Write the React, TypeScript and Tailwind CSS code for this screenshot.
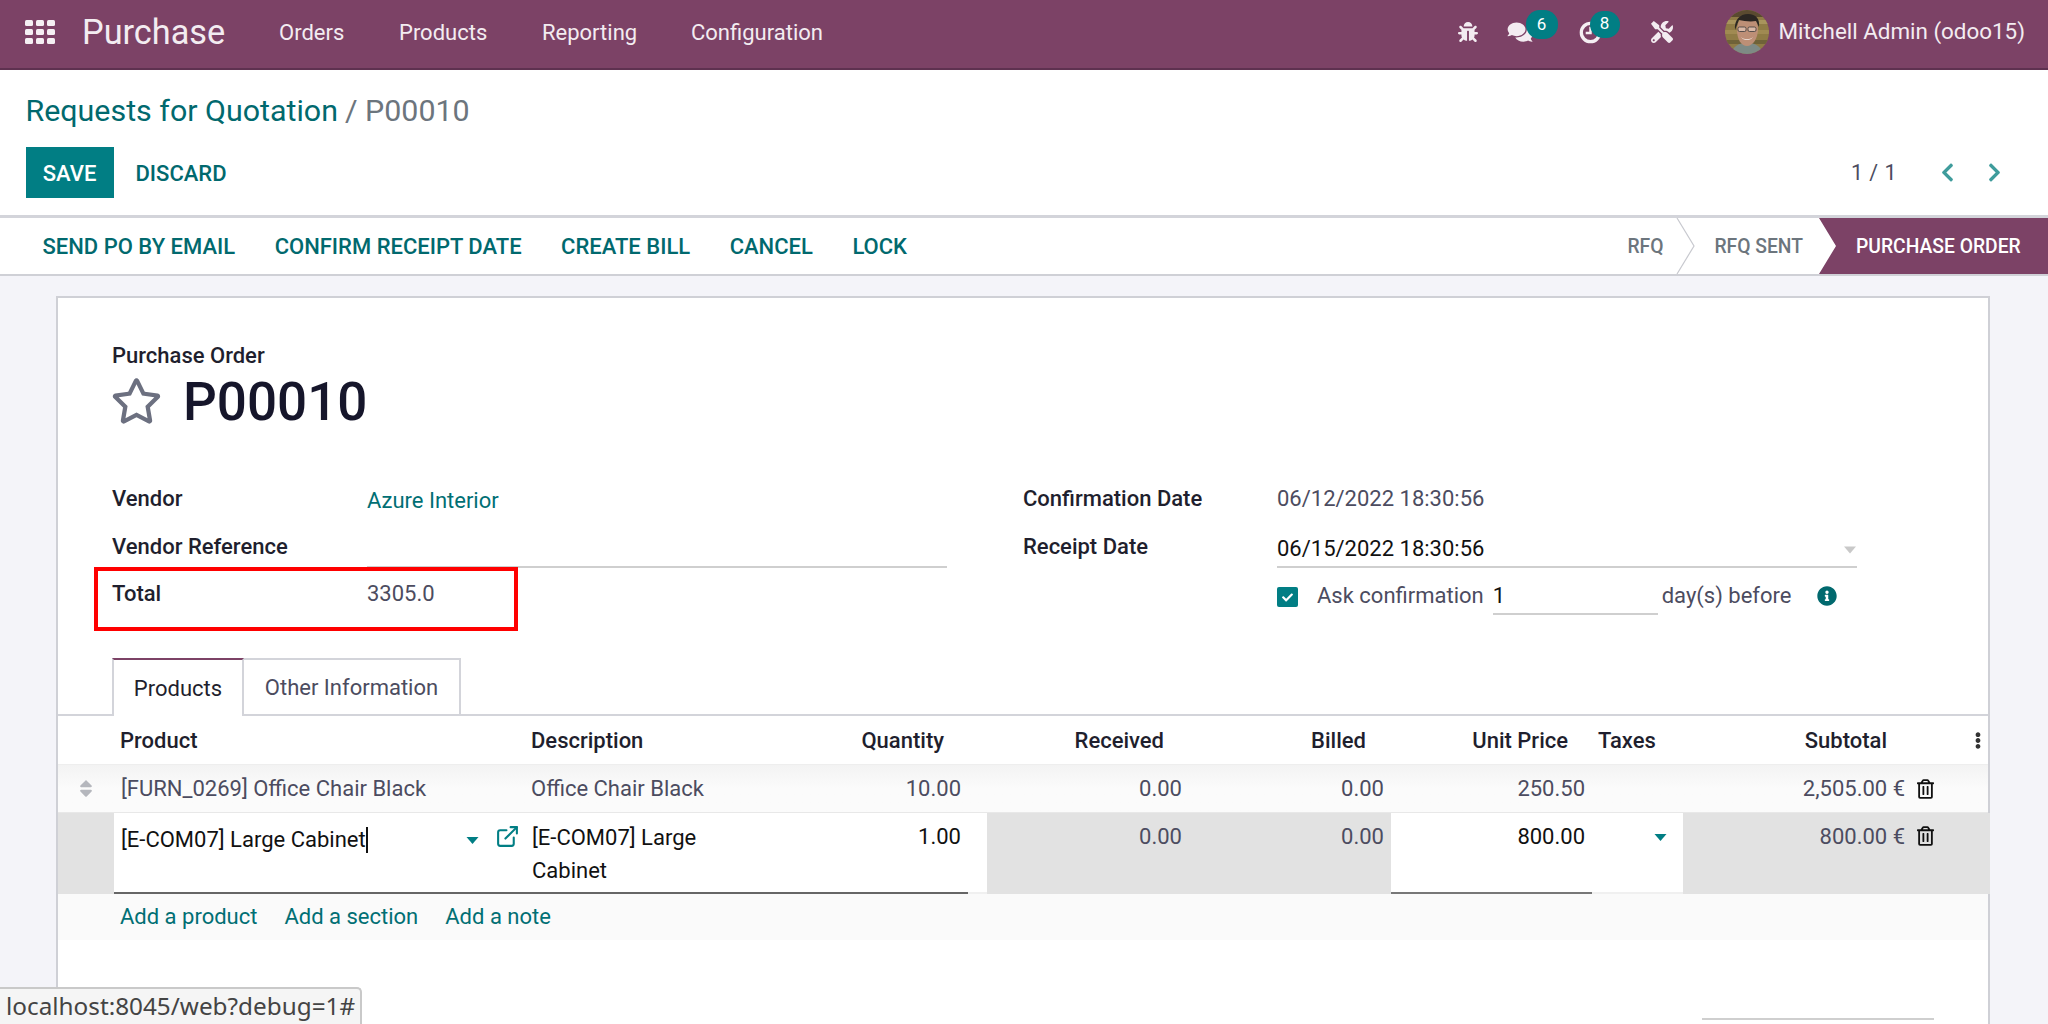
import React from "react";
import { FaBug, FaComments, FaRegStar, FaCheck, FaInfoCircle, FaSort, FaChevronLeft, FaChevronRight, FaRegTrashAlt, FaEllipsisV, FaTools } from "react-icons/fa";
import { FiExternalLink } from "react-icons/fi";

function Caret({ className }: { className: string }) {
  return (
    <svg viewBox="0 0 12 7" className={className} fill="currentColor">
      <path d="M0 0h12L6 7z" />
    </svg>
  );
}

function Avatar() {
  return (
    <svg viewBox="0 0 44 44" className="w-[44px] h-[44px] rounded-full shrink-0">
      <rect width="44" height="44" fill="#8f7b45" />
      <rect x="0" y="10" width="44" height="4" fill="#a8945c" />
      <rect x="0" y="20" width="44" height="4" fill="#a08a52" />
      <rect x="0" y="30" width="44" height="4" fill="#6f6238" />
      <rect x="0" y="0" width="44" height="7" fill="#5a4a30" />
      <path d="M6 44c2-8 8-11 16-11s14 3 16 11z" fill="#7e8a85" />
      <path d="M12 20c0-9 5-13 11-13s10 4 10 12c0 9-5 17-11 17s-10-7-10-16z" fill="#bd8f76" />
      <path d="M10 20c-1-10 5-16 13-16s12 5 11 13l-3-6c-6 1-12 0-17-1l-2 5z" fill="#2b2622" />
      <rect x="13" y="17" width="8" height="4.5" rx="1.5" fill="#d9b8a6" stroke="#3a3a3a" strokeWidth="0.8" />
      <rect x="23" y="17" width="8" height="4.5" rx="1.5" fill="#d9b8a6" stroke="#3a3a3a" strokeWidth="0.8" />
      <path d="M16 27c3 3 9 3 12 0-2 4-10 4-12 0z" fill="#f4ece6" />
    </svg>
  );
}

function AppsIcon() {
  return (
    <div className="grid grid-cols-3 gap-[2.5px] w-[30px] h-[24px] shrink-0">
      {[0, 1, 2, 3, 4, 5, 6, 7, 8].map((i) => (
        <div key={i} className="bg-[#f5eff3] rounded-[1.5px]" />
      ))}
    </div>
  );
}

function ClockIcon() {
  return (
    <svg viewBox="0 0 24 24" className="w-[23px] h-[23px]" fill="none" stroke="#f5eff3" strokeWidth="3.4">
      <circle cx="12" cy="12" r="9.6" />
      <path d="M12 6v6.5H7" strokeWidth="2.6" />
    </svg>
  );
}

const GRID = "grid grid-cols-[56px_411px_240px_203px_19px_202px_202px_201px_91px_229px_78px]";
const GRAY = "bg-[#e2e2e2]";

function Trash() {
  return <FaRegTrashAlt className="w-[17px] h-[20px] text-[#111]" />;
}

export default function App() {
  return (
    <div className="relative w-[2048px] h-[1024px] overflow-hidden bg-[#f4f4f9] font-['Roboto',sans-serif] text-[22px] text-[#4c4c60]">
      {/* navbar */}
      <div className="h-[70px] bg-[#7c4266] border-b-2 border-[#5e3150] flex items-center text-[#f3ecf1] pl-[25px] pb-[4px]">
        <AppsIcon />
        <div className="ml-[27px] w-[197px] text-[34.3px] leading-none">Purchase</div>
        <div className="w-[120px] text-[22px]">Orders</div>
        <div className="w-[143px] text-[22px]">Products</div>
        <div className="w-[149px] text-[22px]">Reporting</div>
        <div className="text-[22px]">Configuration</div>
        <div className="ml-auto flex items-center">
          <FaBug className="w-[20px] h-[20px]" />
          <div className="relative ml-[29px] w-[26px] h-[24px]">
            <FaComments className="w-[26px] h-[22px] mt-[1px]" />
            <div className="absolute left-[19px] top-[-10px] w-[32px] h-[29px] rounded-[14px] bg-[#017e84] text-[17px] text-white flex items-center justify-center">6</div>
          </div>
          <div className="relative ml-[46px] w-[23px] h-[23px]">
            <ClockIcon />
            <div className="absolute left-[11px] top-[-10px] w-[30px] h-[27px] rounded-[14px] bg-[#017e84] text-[17px] text-white flex items-center justify-center">8</div>
          </div>
          <FaTools className="ml-[49px] w-[22px] h-[22px]" />
          <div className="ml-[52px]"><Avatar /></div>
          <div className="ml-[10px] mr-[23px] text-[22.4px] whitespace-nowrap">Mitchell Admin (odoo15)</div>
        </div>
      </div>

      {/* control panel */}
      <div className="h-[148px] bg-white border-b-[3px] border-[#d3d4da] pl-[25.5px] pr-[46px] flex flex-col">
        <div className="mt-[19px] h-[44px] flex items-center text-[30.4px] whitespace-nowrap">
          <span className="text-[#01696e]">Requests for Quotation</span>
          <span className="text-[#6c757d] ml-[7px]">/ P00010</span>
        </div>
        <div className="mt-[14px] flex items-center">
          <div className="w-[88px] h-[51px] bg-[#017e84] text-white font-medium flex items-center justify-center text-[22px] pt-[1px]">SAVE</div>
          <div className="ml-[22px] text-[#01696e] font-medium text-[22px] pt-[1px]">DISCARD</div>
          <div className="ml-auto text-[21.4px] text-[#4c4c60] tracking-[0.5px] pt-[1px]">1 / 1</div>
          <FaChevronLeft className="ml-[43px] w-[15px] h-[21px] text-[#3f9c9c]" />
          <FaChevronRight className="ml-[32px] w-[15px] h-[21px] text-[#3f9c9c]" />
        </div>
      </div>

      {/* status bar */}
      <div className="h-[58px] bg-white border-b-[2px] border-[#cfd0d6] flex items-center pl-[42.5px] relative whitespace-nowrap">
        <div className="flex items-center gap-[39.5px] text-[#01696e] font-medium text-[22px] pt-[1px]">
          <span>SEND PO BY EMAIL</span>
          <span>CONFIRM RECEIPT DATE</span>
          <span>CREATE BILL</span>
          <span>CANCEL</span>
          <span>LOCK</span>
        </div>
        <div className="ml-auto self-stretch flex items-center text-[19.3px] font-medium text-[#6c757d]">
          <span className="pt-[2px]">RFQ</span>
          <svg viewBox="0 0 20 56" className="ml-[13px] w-[20px] h-[56px]" fill="none" stroke="#c8c9cf" strokeWidth="1.2" preserveAspectRatio="none">
            <path d="M1 0l17 28L1 56" />
          </svg>
          <span className="ml-[18px] pt-[2px]">RFQ SENT</span>
          <div className="ml-[16px] h-[56px] w-[229px] pl-[37px] pt-[2px] flex items-center bg-[#7c4266] text-white [clip-path:polygon(0_0,100%_0,100%_100%,0_100%,17px_50%)]">PURCHASE ORDER</div>
        </div>
      </div>

      {/* sheet */}
      <div className="mt-[20px] ml-[56px] w-[1934px] h-[800px] bg-white border-2 border-[#cfd0d6]">
        <div className="pl-[54px] pt-[45px] flex flex-col">
          <div className="font-medium text-[#1f1f2e] leading-[26px]">Purchase Order</div>
          <div className="flex items-center mt-[7px] h-[52px]">
            <FaRegStar className="w-[51px] h-[48px] -mt-[3px] -ml-[1px] text-[#6c7080]" />
            <div className="ml-[21px] text-[53px] font-medium leading-none text-[#16162b] pt-[1px]">P00010</div>
          </div>
          <div className="mt-[59px] flex">
            <div className="w-[857px]">
              <div className="flex h-[47px] items-start">
                <div className="w-[255px] font-medium text-[#1f1f2e] leading-[24px]">Vendor</div>
                <div className="text-[#016f74] leading-[24px] pt-[2px]">Azure Interior</div>
              </div>
              <div className="flex h-[46px] items-start">
                <div className="w-[255px] font-medium text-[#1f1f2e] leading-[24px] pt-[1px] shrink-0">Vendor Reference</div>
                <div className="w-[580px] h-[34px] border-b-2 border-[#cfcfcf]" />
              </div>
              <div className="flex h-[48px] items-start">
                <div className="w-[255px] font-medium text-[#1f1f2e] leading-[24px] pt-[2px]">Total</div>
                <div className="leading-[24px] pt-[2px]">3305.0</div>
              </div>
            </div>
            <div className="ml-[54px] w-[834px]">
              <div className="flex h-[47px] items-start">
                <div className="w-[254px] font-medium text-[#1f1f2e] leading-[24px]">Confirmation Date</div>
                <div className="leading-[24px]">06/12/2022 18:30:56</div>
              </div>
              <div className="flex h-[46px] items-start">
                <div className="w-[254px] font-medium text-[#1f1f2e] leading-[24px] pt-[1px] shrink-0">Receipt Date</div>
                <div className="w-[581px] h-[34px] border-b-2 border-[#cfcfcf] flex justify-between pt-[3px] pr-[1px] text-[#111]">
                  <span className="leading-[24px]">06/15/2022 18:30:56</span>
                  <Caret className="w-[12px] h-[8px] mt-[9px] text-[#c9c9c9]" />
                </div>
              </div>
              <div className="flex items-start pl-[254px] mt-[-1px]">
                <div className="mt-[8px] w-[21px] h-[20px] bg-[#017e84] rounded-[2px] flex items-center justify-center">
                  <FaCheck className="w-[11px] h-[11px] text-white" />
                </div>
                <div className="ml-[19px] mt-[5px] leading-[24px] whitespace-nowrap">Ask confirmation</div>
                <div className="ml-[9px] w-[165px] h-[36px] border-b-2 border-[#cfcfcf] pt-[5px] leading-[24px] text-[#111]">1</div>
                <div className="ml-[4px] mt-[5px] leading-[24px] whitespace-nowrap">day(s) before</div>
                <FaInfoCircle className="ml-[26px] mt-[7px] w-[20px] h-[20px] text-[#01696e]" />
              </div>
            </div>
          </div>
          <div className="mt-[30px] flex h-[56px]">
            <div className="w-[132px] h-[58px] bg-white border-x-2 border-[#d3d4da] border-t-2 border-t-[#7c4266] flex items-center justify-center text-[#1f1f2e] relative z-10">Products</div>
            <div className="w-[217px] h-[56px] border-r-2 border-t-2 border-[#d3d4da] flex items-center justify-center">Other Information</div>
          </div>
        </div>

        <div className="border-t-2 border-[#d3d4da]">
          {/* header */}
          <div className={GRID + " h-[49px] items-center font-medium text-[#1f1f2e] border-b border-[#eeeeee]"}>
            <div />
            <div className="pl-[6px]">Product</div>
            <div className="pl-[6px]">Description</div>
            <div className="text-right pr-[24px]">Quantity</div>
            <div />
            <div className="text-right pr-[25px]">Received</div>
            <div className="text-right pr-[25px]">Billed</div>
            <div className="text-right pr-[24px]">Unit Price</div>
            <div className="pl-[6px]">Taxes</div>
            <div className="text-right pr-[25px]">Subtotal</div>
            <div className="pl-[59px]"><FaEllipsisV className="w-[14px] h-[17px] text-[#333]" /></div>
          </div>

          {/* row 1 */}
          <div className={GRID + " h-[48px] items-center bg-gradient-to-b from-[#f3f3f3] via-[#fbfbfb] to-[#fbfbfb] border-b border-[#e8e8e8]"}>
            <div className="pl-[21px]"><FaSort className="w-[14px] h-[21px] text-[#b5b7bd]" /></div>
            <div className="pl-[7px] whitespace-nowrap">[FURN_0269] Office Chair Black</div>
            <div className="pl-[6px]">Office Chair Black</div>
            <div className="text-right pr-[7px]">10.00</div>
            <div />
            <div className="text-right pr-[7px]">0.00</div>
            <div className="text-right pr-[7px]">0.00</div>
            <div className="text-right pr-[7px]">250.50</div>
            <div />
            <div className="text-right pr-[7px]">2,505.00 €</div>
            <div className="pl-[5px]"><Trash /></div>
          </div>

          {/* row 2 */}
          <div className={GRID + " h-[81px]"}>
            <div className={GRAY} />
            <div className="bg-white border-b-2 border-[#666] pl-[7px] pr-[5px] pt-[14px] flex items-start text-[#111] leading-[26px] whitespace-nowrap">
              <span className="border-r-2 border-[#111]">[E-COM07] Large Cabinet</span>
              <Caret className="ml-auto mt-[10px] w-[13px] h-[7px] text-[#017e84]" />
              <FiExternalLink className="ml-[16px] -mt-[3px] w-[25px] h-[25px] text-[#017e84]" />
            </div>
            <div className="bg-white border-b-2 border-[#666] pl-[7px] pt-[8px] text-[#111] leading-[33px] pr-[40px]">[E-COM07] Large Cabinet</div>
            <div className="bg-white border-b-2 border-[#666] text-right pr-[7px] pt-[12px] text-[#111] leading-[24px]">1.00</div>
            <div className="bg-white border-b-2 border-[#f0f0f0]" />
            <div className={GRAY + " text-right pr-[7px] pt-[12px] leading-[24px]"}>0.00</div>
            <div className={GRAY + " text-right pr-[7px] pt-[12px] leading-[24px]"}>0.00</div>
            <div className="bg-white border-b-2 border-[#777] text-right pr-[7px] pt-[12px] text-[#111] leading-[24px]">800.00</div>
            <div className="bg-white border-b-2 border-[#f0f0f0] pl-[62px] pt-[21px]"><Caret className="w-[13px] h-[7px] text-[#017e84]" /></div>
            <div className={GRAY + " text-right pr-[7px] pt-[12px] leading-[24px]"}>800.00 €</div>
            <div className={GRAY + " pl-[5px] pt-[13px]"}><Trash /></div>
          </div>

          {/* add line */}
          <div className="h-[46px] bg-[#fafafa] flex items-center pl-[62px] pb-[2px] gap-[27px] text-[#016f74]">
            <span>Add a product</span>
            <span>Add a section</span>
            <span>Add a note</span>
          </div>
        </div>
        <div className="ml-[1644px] mt-[78px] w-[232px] border-b-2 border-[#cfcfcf]" />
      </div>

      {/* annotation */}
      <div className="absolute left-[94px] top-[567px] w-[424px] h-[64px] border-[4px] border-[#ff0000]" />

      {/* browser status */}
      <div className="absolute left-0 bottom-0 w-[362px] h-[37px] bg-[#f5f5f5] border-t-2 border-r-2 border-[#c9c9c9] rounded-tr-[5px] pl-[6px] flex items-center font-['Noto_Sans',sans-serif] text-[24.3px] text-[#444] whitespace-nowrap">localhost:8045/web?debug=1#</div>
    </div>
  );
}
